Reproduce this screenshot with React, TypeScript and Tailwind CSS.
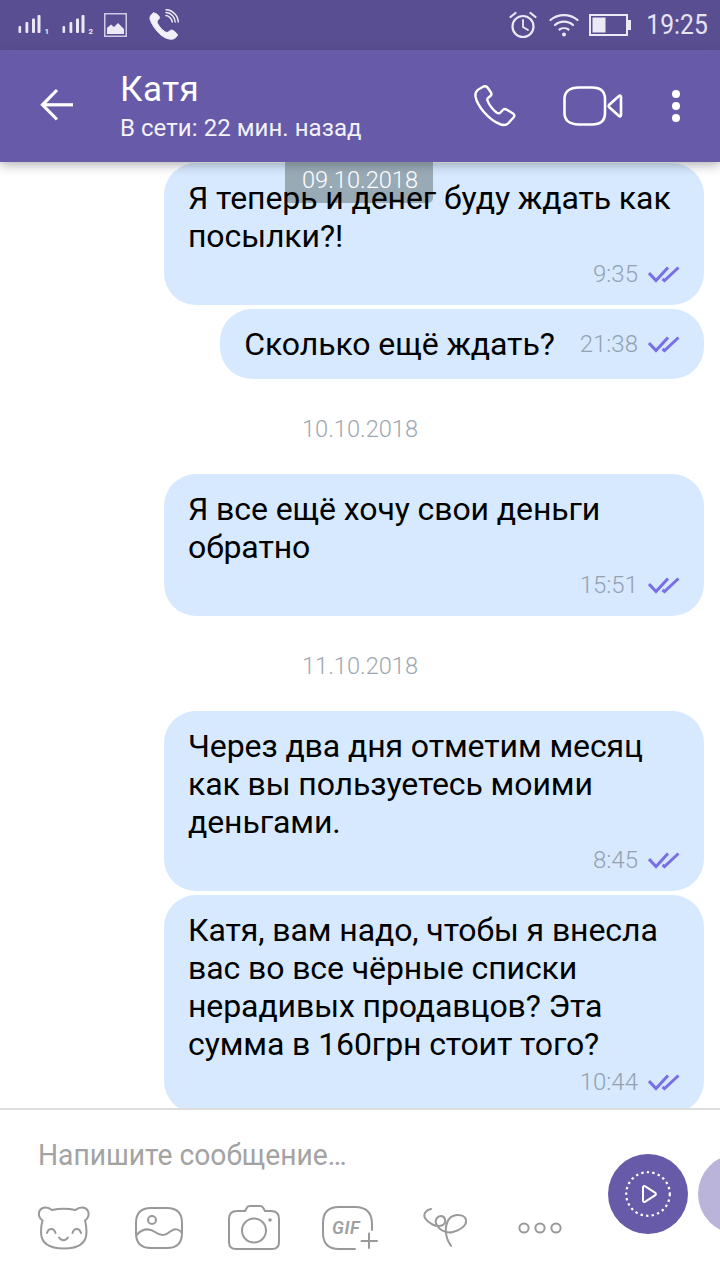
import React from 'react';

const SignalIcon = ({ sim }: { sim: string }) => (
  <span className="relative block h-[24px] w-[31px]">
    <svg width="24" height="24" viewBox="0 0 24 24" fill="#ece9f6" className="block">
      <rect x="0.5" y="11" width="2.6" height="7" rx="1" />
      <rect x="7.5" y="7" width="2.8" height="11" rx="1" />
      <rect x="14" y="3.5" width="3" height="14.5" rx="1" />
      <rect x="19.5" y="0" width="3" height="18" rx="1" />
    </svg>
    <span className="absolute bottom-[3px] right-0 text-[8px] leading-[8px] font-bold text-[#ece9f6]">{sim}</span>
  </span>
);

const Ticks = () => (
  <svg width="32" height="18" viewBox="0 0 32 18" fill="none" stroke="#7a6ee8" strokeWidth="3" className="shrink-0">
    <path d="M1 8 L8 15.5 L20 2.5" />
    <path d="M14.5 14 L16.5 15.5 L30.5 2.5" />
  </svg>
);

const Bubble = ({ lines, time }: { lines: string[]; time: string }) => (
  <div className="w-[540px] shrink-0 rounded-[32px] bg-[#d6e9fe] px-6 pt-[16px] pb-[13px]">
    <div className="relative z-10 text-[32px] leading-[38px] tracking-[-0.1px] text-black">
      {lines.map((line) => (
        <div key={line}>{line}</div>
      ))}
    </div>
    <div className="mt-[1px] flex h-[36px] items-center justify-end gap-[10px]">
      <span className="text-[24px] font-light text-[#94a1b2]">{time}</span>
      <Ticks />
    </div>
  </div>
);

const DateLabel = ({ children }: { children: string }) => (
  <div className="-mr-4 mt-[36px] mb-[31px] shrink-0 self-stretch text-center text-[23.6px] font-light leading-[28px] text-[#9ea7b1]">
    {children}
  </div>
);

export default function App() {
  return (
    <div className="flex h-[1280px] w-[720px] flex-col overflow-hidden bg-white font-['Roboto',sans-serif]">
      {/* status bar */}
      <div className="flex h-[50px] shrink-0 items-center bg-[#594e91] pl-[18px] pr-[12px]">
        <div className="mt-[4px]">
          <SignalIcon sim="1" />
        </div>
        <div className="ml-[13px] mt-[4px]">
          <SignalIcon sim="2" />
        </div>
        <svg width="23" height="24" viewBox="0 0 23 24" className="ml-[11px]">
          <rect x="0.75" y="0.75" width="21.5" height="22.5" fill="none" stroke="#cfcbe6" strokeWidth="1.5" />
          <path d="M3 21 V15 L7 11.5 L10 14 L14 10 L20 16 V21 Z" fill="#ece9f6" />
        </svg>
        <svg width="33" height="32" viewBox="0 0 33 32" fill="none" stroke="#f2f0f9" strokeLinecap="round" className="ml-[21px]">
          <path
            d="M5.5 4 C3.5 5 1.5 7.5 2 10 C3 14 8 22 13 26 C16 28.5 21 31 25 30 C27.5 29.4 29 27.5 29.5 26 C29 24 25 21 23.5 21 C22 21 20.5 23.5 19 23.5 C15.5 23 10 16.5 9 13 C9 11 11.5 10.5 11.5 8.5 C11.5 7 8 3.5 5.5 4 Z"
            fill="#f2f0f9"
          />
          <path d="M18 6.5 C21 6.7 24 10 24.2 13" strokeWidth="1.4" />
          <path d="M18 3.5 C23 3.7 27 8 27.2 13" strokeWidth="1.4" />
          <path d="M18 0.8 C25 1 30.2 7 30.2 13" strokeWidth="1.4" />
        </svg>
        <div className="ml-auto flex items-center">
          <svg width="28" height="28" viewBox="0 0 28 28" fill="none" stroke="#ece9f6" strokeWidth="2.2" strokeLinecap="round">
            <circle cx="14" cy="15.5" r="10.5" />
            <path d="M14 9 V16 L19 19" strokeWidth="1.8" />
            <path d="M1.5 6 L6.5 2" />
            <path d="M26.5 6 L21.5 2" />
          </svg>
          <svg width="30" height="24" viewBox="0 0 30 24" fill="none" stroke="#ece9f6" strokeWidth="2.2" strokeLinecap="round" className="ml-[12px]">
            <path d="M1.5 7 C9 0.5 21 0.5 28.5 7" />
            <path d="M6 12 C11 7.5 19 7.5 24 12" />
            <path d="M10.5 16.5 C13 14.8 17 14.8 19.5 16.5" />
            <circle cx="15" cy="21.5" r="2" fill="#ece9f6" stroke="none" />
          </svg>
          <svg width="42" height="22" viewBox="0 0 42 22" className="ml-[10px]">
            <rect x="1" y="1" width="37" height="20" fill="none" stroke="#ece9f6" strokeWidth="2" />
            <rect x="3.5" y="3.5" width="13" height="15" fill="#ece9f6" />
            <rect x="39" y="6" width="3" height="10" fill="#ece9f6" />
          </svg>
          <span className="ml-[7px] origin-right text-[28px] leading-[32px] text-[#e6e3f3] [transform:scaleX(0.88)]">19:25</span>
        </div>
      </div>

      {/* header */}
      <div className="relative z-20 flex h-[112px] shrink-0 items-center bg-[#665aa9] shadow-[0_3px_10px_rgba(60,60,70,0.4)]">
        <svg width="34" height="34" viewBox="0 0 34 34" fill="none" stroke="white" strokeWidth="3.2" className="ml-[40px] mt-[-2px]">
          <path d="M33 16.8 H3" />
          <path d="M17 2 L2.5 16.8 L17 31.5" />
        </svg>
        <div className="ml-[46px] mt-[-3px] text-white">
          <div className="text-[35px] leading-[44px] tracking-[0.5px]">Катя</div>
          <div className="mt-[2px] text-[24px] leading-[28px] tracking-[0.05px] text-[#f3f2fa]">В сети: 22 мин. назад</div>
        </div>
        <div className="ml-auto flex items-center">
          <svg width="42" height="42" viewBox="0 0 42 42" fill="none" stroke="white" strokeWidth="2.4" strokeLinejoin="round">
            <path d="M6 3.5 C3 5 1 8 1.5 11.5 C3 20 14 35 27 39.5 C30.5 40.5 32.5 40 34 38.5 L39.5 32.5 C40.8 31 40.5 29.5 39 28.5 L32.5 24.5 C31 23.5 29.8 24 28.8 25 L26.5 27.5 C25.5 28.5 24 28.5 22.5 27.5 C19 25 14.5 19 13.5 15.5 C13 14 13.5 13 14.5 12.5 L16.5 11 C17.5 10 17.8 9 17 7.5 L13.5 2.5 C12.5 1 11 1 9.5 1.5 Z" />
          </svg>
          <svg width="60" height="40" viewBox="0 0 60 40" fill="none" stroke="white" strokeWidth="2.6" strokeLinejoin="round" className="ml-[47px]">
            <path d="M16 1.5 H29 C38 1.5 42 6 42 13 V27 C42 34 38 38.5 29 38.5 H16 C6 38.5 1.5 34 1.5 27 V13 C1.5 6 6 1.5 16 1.5 Z" />
            <path d="M58 11 V29 C58 30.5 57 30.8 56 30 L46.5 21.5 C45.5 20.5 45.5 19.5 46.5 18.5 L56 10 C57 9.2 58 9.5 58 11 Z" />
          </svg>
          <div className="ml-[49px] mr-[40px] flex flex-col gap-[4px]">
            <span className="h-[8px] w-[8px] rounded-full bg-white" />
            <span className="h-[8px] w-[8px] rounded-full bg-white" />
            <span className="h-[8px] w-[8px] rounded-full bg-white" />
          </div>
        </div>
      </div>

      {/* messages */}
      <div className="relative flex min-h-0 flex-1 flex-col items-end overflow-hidden pr-4 pt-[1px]">
        <Bubble lines={['Я теперь и денег буду ждать как', 'посылки?!']} time="9:35" />
        <div className="absolute left-[285px] top-0 h-[41px] w-[148px] rounded-b-[5px] bg-[#7f8f98]/70 pl-[2px] text-center text-[23.6px] font-light leading-[36px] text-white">
          09.10.2018
        </div>
        <div className="mt-[4px] flex h-[70px] shrink-0 items-center rounded-[32px] bg-[#d6e9fe] px-6">
          <span className="text-[32px] leading-[38px] tracking-[-0.1px] text-black">Сколько ещё ждать?</span>
          <span className="ml-[25px] text-[24px] font-light text-[#94a1b2]">21:38</span>
          <span className="ml-[10px]">
            <Ticks />
          </span>
        </div>
        <DateLabel>10.10.2018</DateLabel>
        <Bubble lines={['Я все ещё хочу свои деньги', 'обратно']} time="15:51" />
        <DateLabel>11.10.2018</DateLabel>
        <Bubble lines={['Через два дня отметим месяц', 'как вы пользуетесь моими', 'деньгами.']} time="8:45" />
        <div className="mt-[4px] shrink-0">
          <Bubble
            lines={['Катя, вам надо, чтобы я внесла', 'вас во все чёрные списки', 'нерадивых продавцов? Эта', 'сумма в 160грн стоит того?']}
            time="10:44"
          />
        </div>
      </div>

      {/* input bar */}
      <div className="flex h-[172px] shrink-0 overflow-hidden border-t-2 border-[#dedede]">
        <div className="ml-[38px] w-[570px] shrink-0">
          <div className="mt-[25px] origin-left text-[30px] leading-[40px] text-[#a3a3a3] [transform:scaleX(0.94)]">Напишите сообщение…</div>
          <div className="mt-[30px] flex items-center">
            <svg width="52" height="44" viewBox="0 0 52 44" fill="none" stroke="#999" strokeWidth="2" strokeLinecap="round">
              <path d="M14 4 C10 0.5 4 0.5 1.8 4.5 C0 8 1 12.5 4.5 14.5 C3.5 18 3 22 3 26 C3 37 11 42.5 26 42.5 C41 42.5 48.5 37 48.5 26 C48.5 22 48 18 47 14.5 C50.5 12.5 51.5 8 49.7 4.5 C47.5 0.5 41.5 0.5 37.5 4 C30 2.5 21 2.5 14 4 Z" />
              <path d="M9 27 C10.5 21.5 16 21.5 17.5 27" />
              <path d="M34.5 27 C36 21.5 41.5 21.5 43 27" />
              <path d="M21 31.5 C23 35 28 35 30 31.5" />
            </svg>
            <svg width="48" height="42" viewBox="0 0 48 42" fill="none" stroke="#999" strokeWidth="2" className="ml-[45px]">
              <path d="M16 1 H32 C42 1 47 6 47 16 V26 C47 36 42 41 32 41 H16 C6 41 1 36 1 26 V16 C1 6 6 1 16 1 Z" />
              <circle cx="17" cy="13" r="4" />
              <path d="M1.5 28 C8 21 14 21 20 25 C27 30 31 28 36 24 C40 21 44 22 47 26" />
            </svg>
            <svg width="52" height="45" viewBox="0 0 52 45" fill="none" stroke="#999" strokeWidth="2" strokeLinejoin="round" className="ml-[45px]">
              <path d="M17 6 L19 2.5 C19.5 1.5 20.5 1 22 1 H32 C33.5 1 34.5 1.5 35 2.5 L37 6 H43 C48 6 51 9 51 14 V37 C51 41 49 44 44 44 H8 C3 44 1 41 1 37 V14 C1 9 4 6 9 6 Z" />
              <circle cx="26" cy="25.5" r="12" />
              <circle cx="42" cy="15" r="1.8" fill="#999" stroke="none" />
            </svg>
            <span className="relative ml-[42px] block h-[44px] w-[56px]">
              <svg width="56" height="44" viewBox="0 0 56 44" fill="none" stroke="#999" strokeWidth="2" strokeLinecap="round" className="block">
                <path d="M33 43 H17 C6 43 1 37 1 27 V17 C1 6 6 1 17 1 H33 C44 1 50 7 50 18 V24" />
                <path d="M47 27.5 V42 M39.5 35 H55" />
              </svg>
              <span className="absolute left-[10px] top-[11px] text-[18px] font-semibold italic leading-[22px] tracking-[0.5px] text-[#a0a0a0]">GIF</span>
            </span>
            <svg width="44" height="40" viewBox="0 0 44 40" fill="none" stroke="#999" strokeWidth="2" strokeLinecap="round" className="ml-[45px]">
              <path d="M8 1 C3 2 0 6 2 10 C5 15 13 20 20 17 C24 14 22 8 18 8 C14 8 12 12 13 15 C15 21 22 26 30 24 C38 22 44 17 43 12 C42 7 35 6 30 8 C25 10 22 17 23 25 C23.5 31 26 35 28 38" />
            </svg>
            <svg width="44" height="12" viewBox="0 0 44 12" fill="none" stroke="#999" strokeWidth="2" className="ml-[51px]">
              <circle cx="6" cy="6" r="4.6" />
              <circle cx="22" cy="6" r="4.6" />
              <circle cx="38" cy="6" r="4.6" />
            </svg>
          </div>
        </div>
        <div className="mt-[44px] flex h-[80px] shrink-0 gap-[10px]">
          <div className="flex h-[80px] w-[80px] shrink-0 items-center justify-center rounded-full bg-[#665aa9]">
            <svg width="48" height="48" viewBox="0 0 48 48" fill="none" stroke="white" strokeLinejoin="round">
              <circle cx="24" cy="24" r="21.8" strokeWidth="2.2" strokeDasharray="2.4 3.2" />
              <path d="M19 17.5 C19 16 20 15.5 21.3 16.3 L31 22.6 C32.2 23.4 32.2 24.6 31 25.4 L21.3 31.7 C20 32.5 19 32 19 30.5 Z" strokeWidth="2" />
            </svg>
          </div>
          <div className="h-[80px] w-[80px] shrink-0 rounded-full bg-[#bab3da]" />
        </div>
      </div>
    </div>
  );
}
